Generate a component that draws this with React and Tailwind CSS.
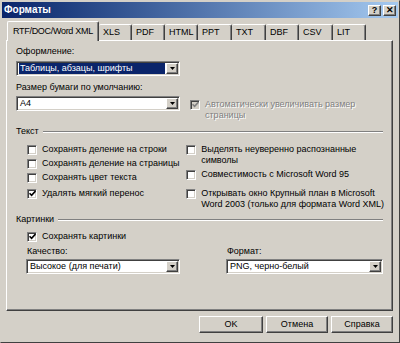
import React from "react";

const raised =
  "border border-t-white border-l-white border-r-[#404040] border-b-[#404040] shadow-[inset_-1px_-1px_0_#808080]";
const sunken =
  "border border-t-[#808080] border-l-[#808080] border-r-white border-b-white shadow-[inset_1px_1px_0_#404040,inset_-1px_-1px_0_#d4d0c8]";

const Check = ({ color = "#000" }) => (
  <svg width="7" height="7" viewBox="0 0 7 7" className="block">
    <path d="M0.5 3.2 L2.6 5.4 L6.5 1" fill="none" stroke={color} strokeWidth="1.6" />
  </svg>
);

const Checkbox = ({ checked, disabled }) => (
  <span
    className={`shrink-0 w-[10px] h-[10px] mt-[0.5px] flex items-center justify-center ${sunken} ${
      disabled ? "bg-[#d4d0c8]" : "bg-white"
    }`}
  >
    {checked && <Check color={disabled ? "#808080" : "#000"} />}
  </span>
);

const CheckRow = ({ checked, disabled, children }) => (
  <div className="flex items-start gap-[5px] leading-[11px] whitespace-nowrap">
    <Checkbox checked={checked} disabled={disabled} />
    <span className={disabled ? "text-[#808080] [text-shadow:1px_1px_0_#fff]" : ""}>{children}</span>
  </div>
);

const Select = ({ value, highlight, className }) => (
  <div className={`h-[15px] flex items-stretch bg-white ${sunken} ${className}`}>
    <div className="flex-1 flex items-center p-[1px] pl-[2px] min-w-0">
      <span
        className={`flex-1 h-full flex items-center pl-[1px] whitespace-nowrap ${
          highlight ? "bg-[#0a246a] text-white" : ""
        }`}
      >
        {value}
      </span>
    </div>
    <div className={`w-[12px] my-[1px] mr-[1px] bg-[#d4d0c8] flex items-center justify-center ${raised}`}>
      <svg width="5" height="3" viewBox="0 0 5 3" className="block">
        <path d="M0 0 H5 L2.5 3 Z" fill="#000" />
      </svg>
    </div>
  </div>
);

const Group = ({ label }) => (
  <div className="flex items-center gap-[4px] leading-[11px] pr-[1px]">
    <span>{label}</span>
    <div className="flex-1 h-[2px] border-t border-t-[#808080] border-b border-b-white" />
  </div>
);

const tabs = ["XLS", "PDF", "HTML", "PPT", "TXT", "DBF", "CSV", "LIT"];
const tabWidths = ["w-[33px]", "w-[33px]", "w-[33px]", "w-[34px]", "w-[34px]", "w-[33px]", "w-[34px]", "w-[33px]"];

export default function App() {
  return (
    <div className="w-[400px] h-[343px] bg-[#d4d0c8] text-black text-[9px] font-['Tahoma','Liberation_Sans',sans-serif] border border-t-[#d4d0c8] border-l-[#d4d0c8] border-r-[#404040] border-b-[#404040] p-px flex flex-col overflow-hidden">
      {/* Title bar */}
      <div className="h-[16px] flex items-center justify-between pl-[2px] pr-[2px] bg-gradient-to-r from-[#0a246a] to-[#a6caf0]">
        <span className="text-white font-bold text-[10px] leading-none">Форматы</span>
        <div className="flex gap-[2px]">
          <span className={`w-[13px] h-[11px] bg-[#d4d0c8] flex items-center justify-center font-bold text-[9px] leading-none ${raised}`}>?</span>
          <span className={`w-[13px] h-[11px] bg-[#d4d0c8] flex items-center justify-center font-bold text-[9px] leading-none ${raised}`}>✕</span>
        </div>
      </div>

      {/* Tabs */}
      <div className="mt-[3px] ml-[5px] h-[19px] flex items-end">
        <div className="relative top-[1px] z-10 h-[20px] w-[92px] bg-[#d4d0c8] border-t border-l border-t-white border-l-white border-r border-r-[#404040] shadow-[inset_-1px_0_0_#808080] rounded-t-[2px] flex items-center pl-[5px] tracking-[-0.3px] whitespace-nowrap">
          RTF/DOC/Word XML
        </div>
        {tabs.map((t, i) => (
          <div
            key={t}
            className={`h-[16px] ${tabWidths[i]} border-t border-t-white border-r border-r-[#404040] shadow-[inset_-1px_0_0_#808080] rounded-t-[2px] flex items-center pl-[4px]`}
          >
            {t}
          </div>
        ))}
      </div>

      {/* Panel */}
      <div className={`ml-[4px] w-[387px] h-[271px] flex flex-col pl-[9px] pr-[8px] pt-[5px] ${raised}`}>
        <div className="leading-[11px]">Оформление:</div>
        <Select value="Таблицы, абзацы, шрифты" highlight className="mt-[4px] w-[164px]" />
        <div className="leading-[11px] mt-[6px]">Размер бумаги по умолчанию:</div>
        <div className="flex items-start mt-[3px]">
          <Select value="A4" className="w-[164px]" />
          <div className="ml-[10px] mt-[3px] w-[170px]">
            <CheckRow checked disabled>
              Автоматически увеличивать размер
              <br />
              страницы
            </CheckRow>
          </div>
        </div>

        <div className="mt-[5px]">
          <Group label="Текст" />
        </div>
        <div className="flex mt-[7px] pl-[11px]">
          <div className="w-[164px] flex flex-col">
            <CheckRow>Сохранять деление на строки</CheckRow>
            <div className="mt-[3px]">
              <CheckRow>Сохранять деление на страницы</CheckRow>
            </div>
            <div className="mt-[3px]">
              <CheckRow>Сохранять цвет текста</CheckRow>
            </div>
            <div className="mt-[5px]">
              <CheckRow checked>Удалять мягкий перенос</CheckRow>
            </div>
          </div>
          <div className="flex flex-col">
            <CheckRow>
              Выделять неуверенно распознанные
              <br />
              символы
            </CheckRow>
            <div className="mt-[3px]">
              <CheckRow>Совместимость с Microsoft Word 95</CheckRow>
            </div>
            <div className="mt-[8px]">
              <CheckRow>
                Открывать окно Крупный план в Microsoft
                <br />
                Word 2003 (только для формата Word XML)
              </CheckRow>
            </div>
          </div>
        </div>

        <div className="mt-[4px]">
          <Group label="Картинки" />
        </div>
        <div className="pl-[11px] mt-[6px]">
          <CheckRow checked>Сохранять картинки</CheckRow>
        </div>
        <div className="flex pl-[10px] mt-[4px] gap-[46px]">
          <div className="flex flex-col">
            <div className="leading-[11px] pl-[1px]">Качество:</div>
            <Select value="Высокое (для печати)" className="mt-[2px] w-[154px]" />
          </div>
          <div className="flex flex-col">
            <div className="leading-[11px] pl-[1px]">Формат:</div>
            <Select value="PNG, черно-белый" className="mt-[2px] w-[157px]" />
          </div>
        </div>
      </div>

      {/* Buttons */}
      <div className="mt-[5px] mr-[5px] flex justify-end gap-[3px]">
        <button className={`h-[17px] w-[64px] bg-[#d4d0c8] flex items-center justify-center ${raised}`}>OK</button>
        <button className={`h-[17px] w-[62px] bg-[#d4d0c8] flex items-center justify-center ${raised}`}>Отмена</button>
        <button className={`h-[17px] w-[62px] bg-[#d4d0c8] flex items-center justify-center ${raised}`}>Справка</button>
      </div>
    </div>
  );
}
